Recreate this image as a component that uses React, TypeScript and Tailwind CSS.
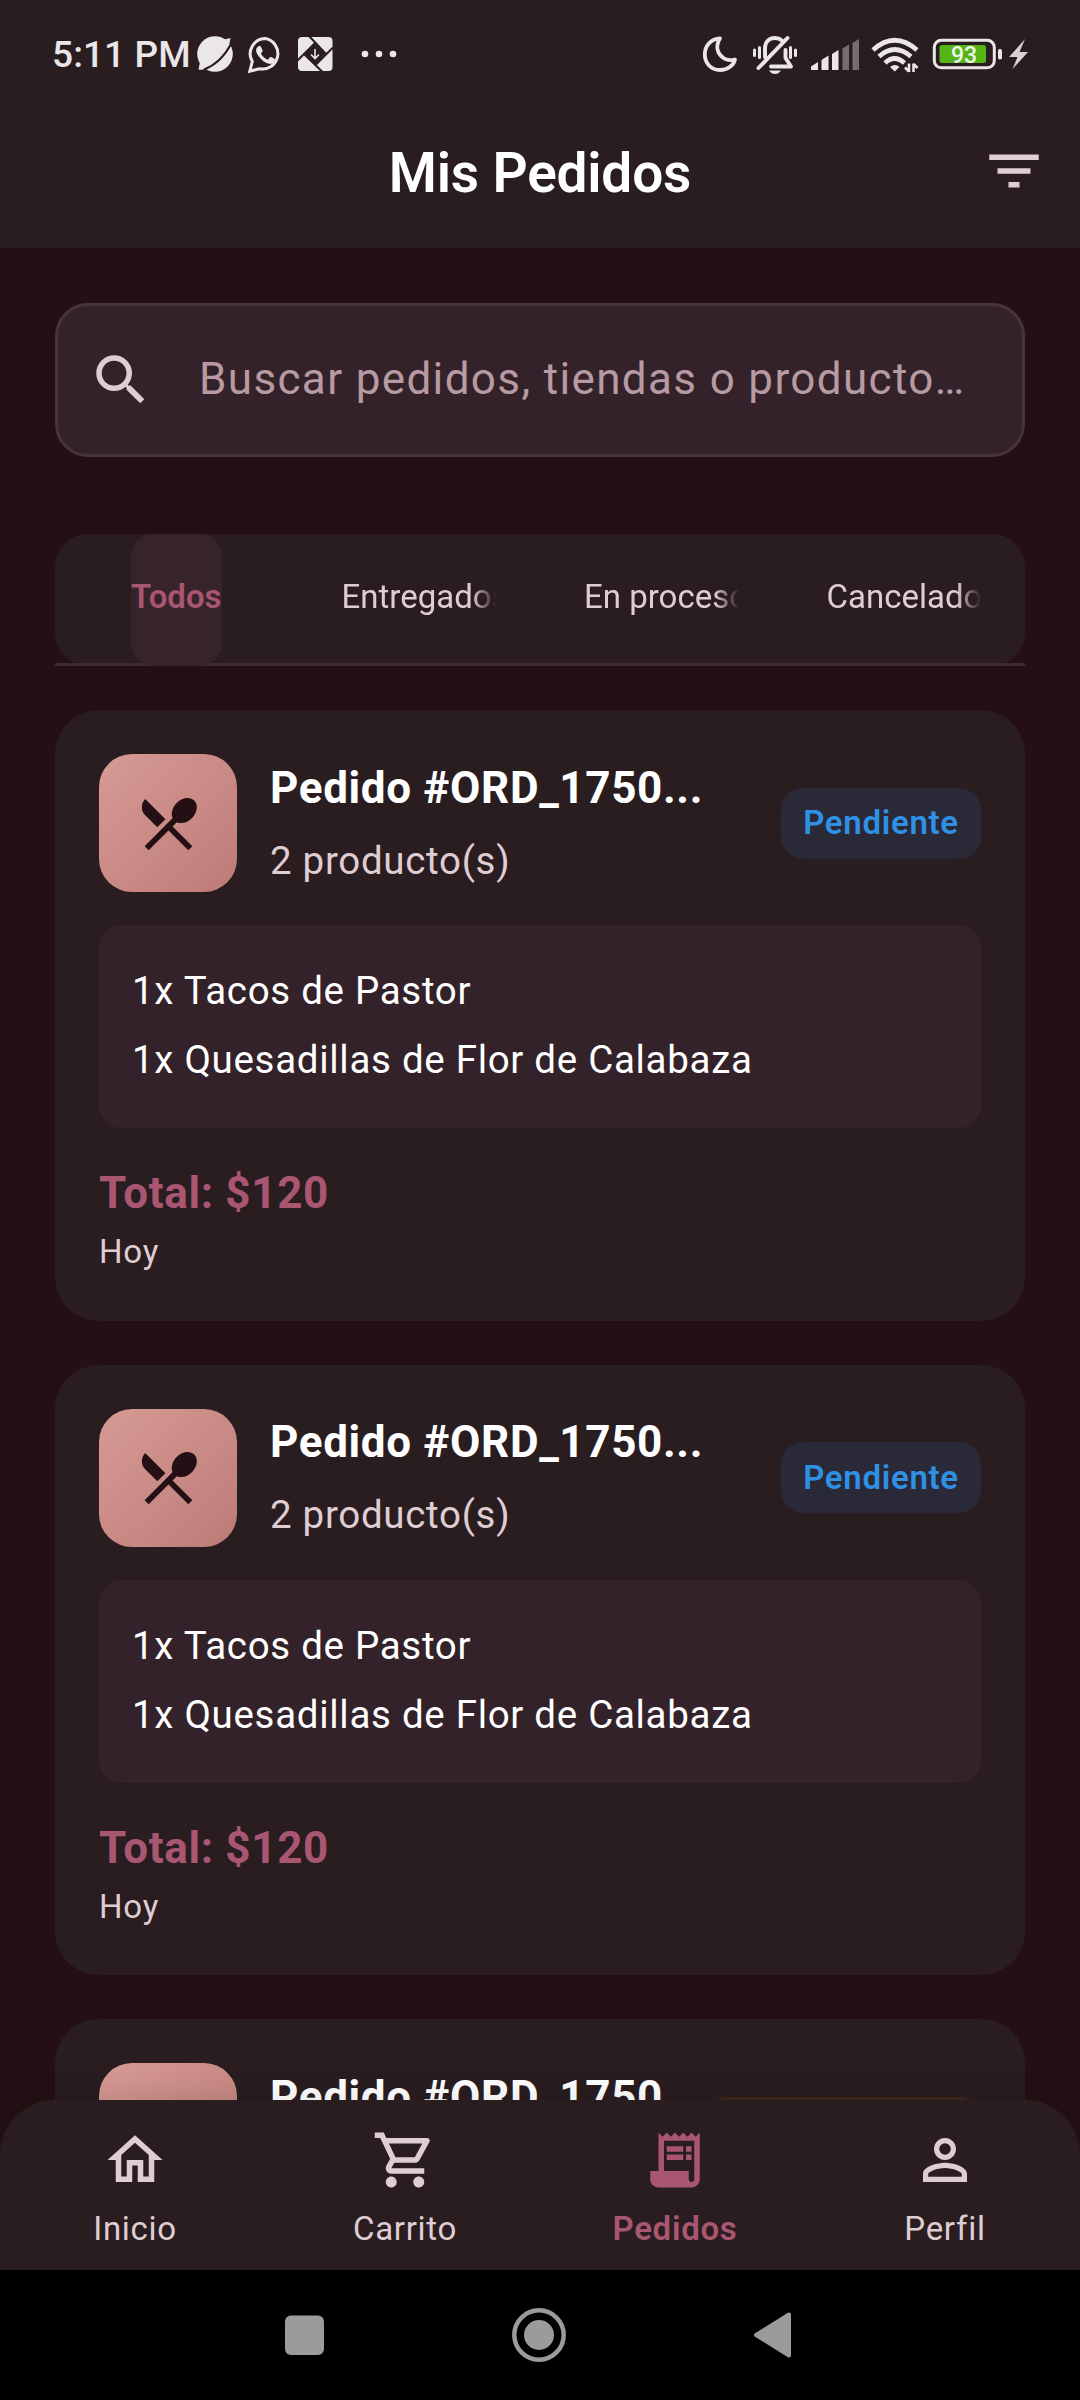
import type { FC, ReactNode } from 'react';
import type { IconType } from 'react-icons';
import {
  MdFilterList,
  MdSearch,
  MdRestaurantMenu,
  MdOutlineHome,
  MdOutlineShoppingCart,
  MdReceiptLong,
  MdPersonOutline,
} from 'react-icons/md';

interface Order {
  id: number;
  title: string;
  count: string;
  items: string[];
  total: string;
  date: string;
  status?: string;
}

const orders: Order[] = [
  {
    id: 1,
    title: 'Pedido #ORD_1750...',
    count: '2 producto(s)',
    items: ['1x Tacos de Pastor', '1x Quesadillas de Flor de Calabaza'],
    total: 'Total: $120',
    date: 'Hoy',
    status: 'Pendiente',
  },
  {
    id: 2,
    title: 'Pedido #ORD_1750...',
    count: '2 producto(s)',
    items: ['1x Tacos de Pastor', '1x Quesadillas de Flor de Calabaza'],
    total: 'Total: $120',
    date: 'Hoy',
    status: 'Pendiente',
  },
];

const tabs = ['Todos', 'Entregados', 'En proceso', 'Cancelados'];

const navItems: { label: string; icon: IconType; active?: boolean }[] = [
  { label: 'Inicio', icon: MdOutlineHome },
  { label: 'Carrito', icon: MdOutlineShoppingCart },
  { label: 'Pedidos', icon: MdReceiptLong, active: true },
  { label: 'Perfil', icon: MdPersonOutline },
];

const StatusBar: FC = () => (
  <div className="flex h-[108px] items-start pl-[52px] pt-[34px] text-[#ebe7e8]">
    <span className="w-[145px] whitespace-nowrap text-[37px] font-medium leading-[42px] tracking-[0.1px]">5:11 PM</span>

    {/* Notification icons */}
    <svg className="h-[40px] w-[210px] shrink-0" viewBox="197 34 210 40" fill="currentColor">
      <circle cx="215" cy="54" r="17.8" />
      <path d="M198.500 69.500L200 62L222 40L230.500 38L229 46L213 66Q204 70.500 198.500 69.500Z" />
      <path d="M204 69.500Q221 63 231 44" fill="none" stroke="#2a1d20" strokeWidth="2" />
      <path
        d="M265.500 38.500a15.300 15.300 0 0 0-13.200 23L249.800 71.200l9.600-2.500A15.300 15.300 0 1 0 265.500 38.500z"
        fill="none"
        stroke="currentColor"
        strokeWidth="3"
      />
      <path d="M258.300 46.500q1.300-1.300 2.500 0l1.900 4.200q0 1.200-1.800 2.800q2.400 4.600 7 6.300l2.300-2.700q1-.6 4.600 1.800q.6 3.500-2.700 4.700q-4.700 1.400-10.600-4q-6.700-6.800-5.200-10.800q.5-1.400 2-2.300z" />
      <rect x="298" y="37" width="34.500" height="34" rx="4" />
      <path d="M315 43.500L325.500 54L315 64.500L304.500 54z" fill="#2a1d20" />
      <path d="M309 36L326.500 54.500M333 47.500L315 65.500M322.500 72L304.500 54.500M297 61L315 43" stroke="#2a1d20" strokeWidth="2" fill="none" />
      <path d="M315 49v9M311 54.500l4 4l4-4" stroke="currentColor" strokeWidth="1.600" fill="none" />
      <circle cx="365" cy="54" r="3.300" />
      <circle cx="379" cy="54" r="3.300" />
      <circle cx="393" cy="54" r="3.300" />
    </svg>

    {/* System icons */}
    <svg className="ml-[293px] h-[44px] w-[335px] shrink-0" viewBox="700 34 335 44" fill="currentColor">
      <path
        d="M720 38.300C711 38.500 704.800 46 704.800 54.500C704.800 63 711 70 720 70C727.500 70 733.500 65.500 735 59.500C728 61.500 722 58.500 718.500 52.500C716.500 48 717 43 720 38.300z"
        fill="none"
        stroke="currentColor"
        strokeWidth="3.800"
        strokeLinejoin="round"
      />
      <g fill="none" stroke="currentColor" strokeLinecap="round" strokeLinejoin="round">
        <path d="M765 57V48.500C765 41.500 769.500 38 775 38Q779 38 782 40.500M785.500 50V58L791 66.500H771" strokeWidth="3.900" />
        <path d="M787.500 38L758.500 68" strokeWidth="3.900" />
        <path d="M754.500 50v5.500M759.500 47.500v10M790.500 47.500v10M795.500 50v5.500" strokeWidth="3" />
      </g>
      <path d="M769 70.500h12q-2.500 3.500-6 3.500t-6-3.500z" />
      <path d="M811 66.500l7-4.500v8h-7zM821.500 60l7-4.500V70h-7zM832 54l6.500-4V70h-6.500z" />
      <path d="M842.500 48.500l6.500-4V70h-6.500zM852.500 43l6.500-4V70h-6.500z" opacity=".4" />
      <g fill="none" stroke="currentColor" strokeWidth="4.600">
        <path d="M873 50Q894.500 30.500 917 50" />
        <path d="M879 56.500Q894.500 42.500 911 56.500" />
        <path d="M885 63Q894.500 54 904.500 63" />
      </g>
      <path d="M890 67q5-4 9.500 0l-4.700 4.500z" />
      <path d="M909 63.500v8.500M913.500 72v-8.500M909 71.500l-4-4M913.500 64l4 4" stroke="currentColor" strokeWidth="2.600" fill="none" />
      <rect x="934.300" y="40.300" width="60" height="27.500" rx="7" fill="none" stroke="currentColor" strokeWidth="3" />
      <rect x="939.500" y="45" width="46.500" height="18" rx="2.500" fill="#55b516" />
      <rect x="998" y="49" width="4" height="10.500" rx="1.800" />
      <text x="964" y="62.500" textAnchor="middle" fontSize="23" fontWeight="500" fill="#eef6e8">
        93
      </text>
      <path d="M1025 39L1009 57h8.500L1012.500 69L1028 52h-8.500z" opacity=".9" />
    </svg>
  </div>
);

const Header: FC = () => (
  <header className="h-[248px] bg-[#2a1d20]">
    <StatusBar />
    <div className="flex h-[126px] items-center pr-[33px]">
      <h1 className="flex-1 pl-[99px] pt-[4px] text-center text-[55px] font-semibold leading-none tracking-[-0.2px] text-white">
        Mis Pedidos
      </h1>
      <MdFilterList className="size-[66px] text-[#dfcdd3]" />
    </div>
  </header>
);

const SearchBox: FC = () => (
  <div className="flex h-[154px] items-center rounded-[33px] border-[3px] border-[#49333b] bg-[#34222a] pl-[30px]">
    <MdSearch className="size-[66px] text-[#dfcdd3]" />
    <span className="ml-[45px] whitespace-nowrap pb-[3px] text-[44px] tracking-[1.36px] text-[#b79aa2]">
      Buscar pedidos, tiendas o producto…
    </span>
  </div>
);

const Tabs: FC = () => (
  <div>
    <div className="grid h-[132px] grid-cols-4 rounded-[33px] bg-[#2a1d20]">
      {tabs.map((tab, i) =>
        i === 0 ? (
          <div key={tab} className="flex justify-center">
            <span className="flex items-center rounded-[22px] bg-[#37242a] pb-[7px] text-[33px] font-semibold text-[#a85672]">
              {tab}
            </span>
          </div>
        ) : (
          <div key={tab} className="flex items-center px-[44px] pb-[7px]">
            <span className="w-full overflow-hidden whitespace-nowrap text-[33px] text-[#dfcdd3] [mask-image:linear-gradient(to_right,black_calc(100%-24px),transparent)]">
              {tab}
            </span>
          </div>
        ),
      )}
    </div>
    {/* Divider runs over the rounded bottom of the bar */}
    <div className="-mt-[3px] h-[3px] bg-[#3f2a32]" />
  </div>
);

const OrderHeading: FC<{ title: string; count: string; badge: ReactNode }> = ({ title, count, badge }) => (
  <div className="flex h-[138px] items-center">
    <div className="flex size-[138px] shrink-0 items-center justify-center rounded-[33px] bg-linear-to-br from-[#d79a95] to-[#bd7b77] text-[#241014]">
      <MdRestaurantMenu className="size-[69px]" />
    </div>
    <div className="ml-[33px] flex-1 whitespace-nowrap pb-[4px]">
      <h2 className="text-[44px] font-bold leading-[66px] tracking-[0.65px] text-white">{title}</h2>
      <p className="mt-[12px] text-[38.5px] leading-[55px] tracking-[0.7px] text-[#dfcdd3]">{count}</p>
    </div>
    {badge}
  </div>
);

const OrderCard: FC<{ order: Order }> = ({ order }) => (
  <article className="mb-[44px] h-[610.5px] rounded-[44px] bg-[#2a1d20] p-[44px]">
    <OrderHeading
      title={order.title}
      count={order.count}
      badge={
        <span className="flex h-[71px] w-[200px] items-center justify-center rounded-[22px] bg-[#2a2937] text-[33px] font-semibold tracking-[0.7px] text-[#2f90e4]">
          {order.status}
        </span>
      }
    />
    <ul className="mt-[33px] h-[203px] rounded-[22px] bg-[#34222a] px-[33px] pt-[31px] text-[38.5px] tracking-[0.7px] text-white">
      {order.items.map((item) => (
        <li key={item} className="h-[69px] leading-[69px]">
          {item}
        </li>
      ))}
    </ul>
    <p className="mt-[32px] text-[44px] font-bold leading-[66px] tracking-[0.65px] text-[#a85672]">{order.total}</p>
    <p className="mt-[2px] text-[33px] leading-[47px] tracking-[0.8px] text-[#dfcdd3]">{order.date}</p>
  </article>
);

const BottomNav: FC = () => (
  <nav className="relative z-10 grid h-[170px] grid-cols-4 rounded-t-[55px] bg-[#2a1d20] shadow-[0_-5px_28px_rgba(0,0,0,0.1)]">
    {navItems.map(({ label, icon: Icon, active }) => (
      <div
        key={label}
        className={`flex flex-col items-center pt-[27px] ${active ? 'font-semibold text-[#a85672]' : 'text-[#dfcdd3]'}`}
      >
        <Icon className="size-[66px]" />
        <span className="mt-[12px] text-[33px] leading-[47px] tracking-[0.7px]">{label}</span>
      </div>
    ))}
  </nav>
);

const SystemNav: FC = () => (
  <div className="flex h-[130px] items-center justify-center bg-black text-[#9b9b9b]">
    <svg className="h-[60px] w-[520px]" viewBox="280 2305 520 60" fill="currentColor">
      <rect x="285" y="2315.500" width="39" height="39.500" rx="6" />
      <circle cx="539" cy="2335" r="24.700" fill="none" stroke="currentColor" strokeWidth="4.500" />
      <circle cx="539" cy="2335" r="15" />
      <path d="M756 2335L789 2314.500V2355.500z" stroke="currentColor" strokeWidth="4" strokeLinejoin="round" />
    </svg>
  </div>
);

export default function App() {
  return (
    <div className="flex h-[2400px] w-[1080px] flex-col overflow-hidden bg-[#241014] font-[Roboto,sans-serif]">
      <Header />
      <main className="-mb-[55px] min-h-0 flex-1 overflow-hidden px-[55px] pt-[55px]">
        <SearchBox />
        <div className="mt-[77px]">
          <Tabs />
        </div>
        <div className="mt-[44px]">
          {orders.map((order) => (
            <OrderCard key={order.id} order={order} />
          ))}
          <article className="h-[610px] rounded-[44px] bg-[#2a1d20] p-[44px]">
            <OrderHeading
              title="Pedido #ORD_1750"
              count="1 producto(s)"
              badge={<span className="h-[71px] w-[275px] rounded-[22px] bg-[#41281c]" />}
            />
          </article>
        </div>
      </main>
      <BottomNav />
      <SystemNav />
    </div>
  );
}
